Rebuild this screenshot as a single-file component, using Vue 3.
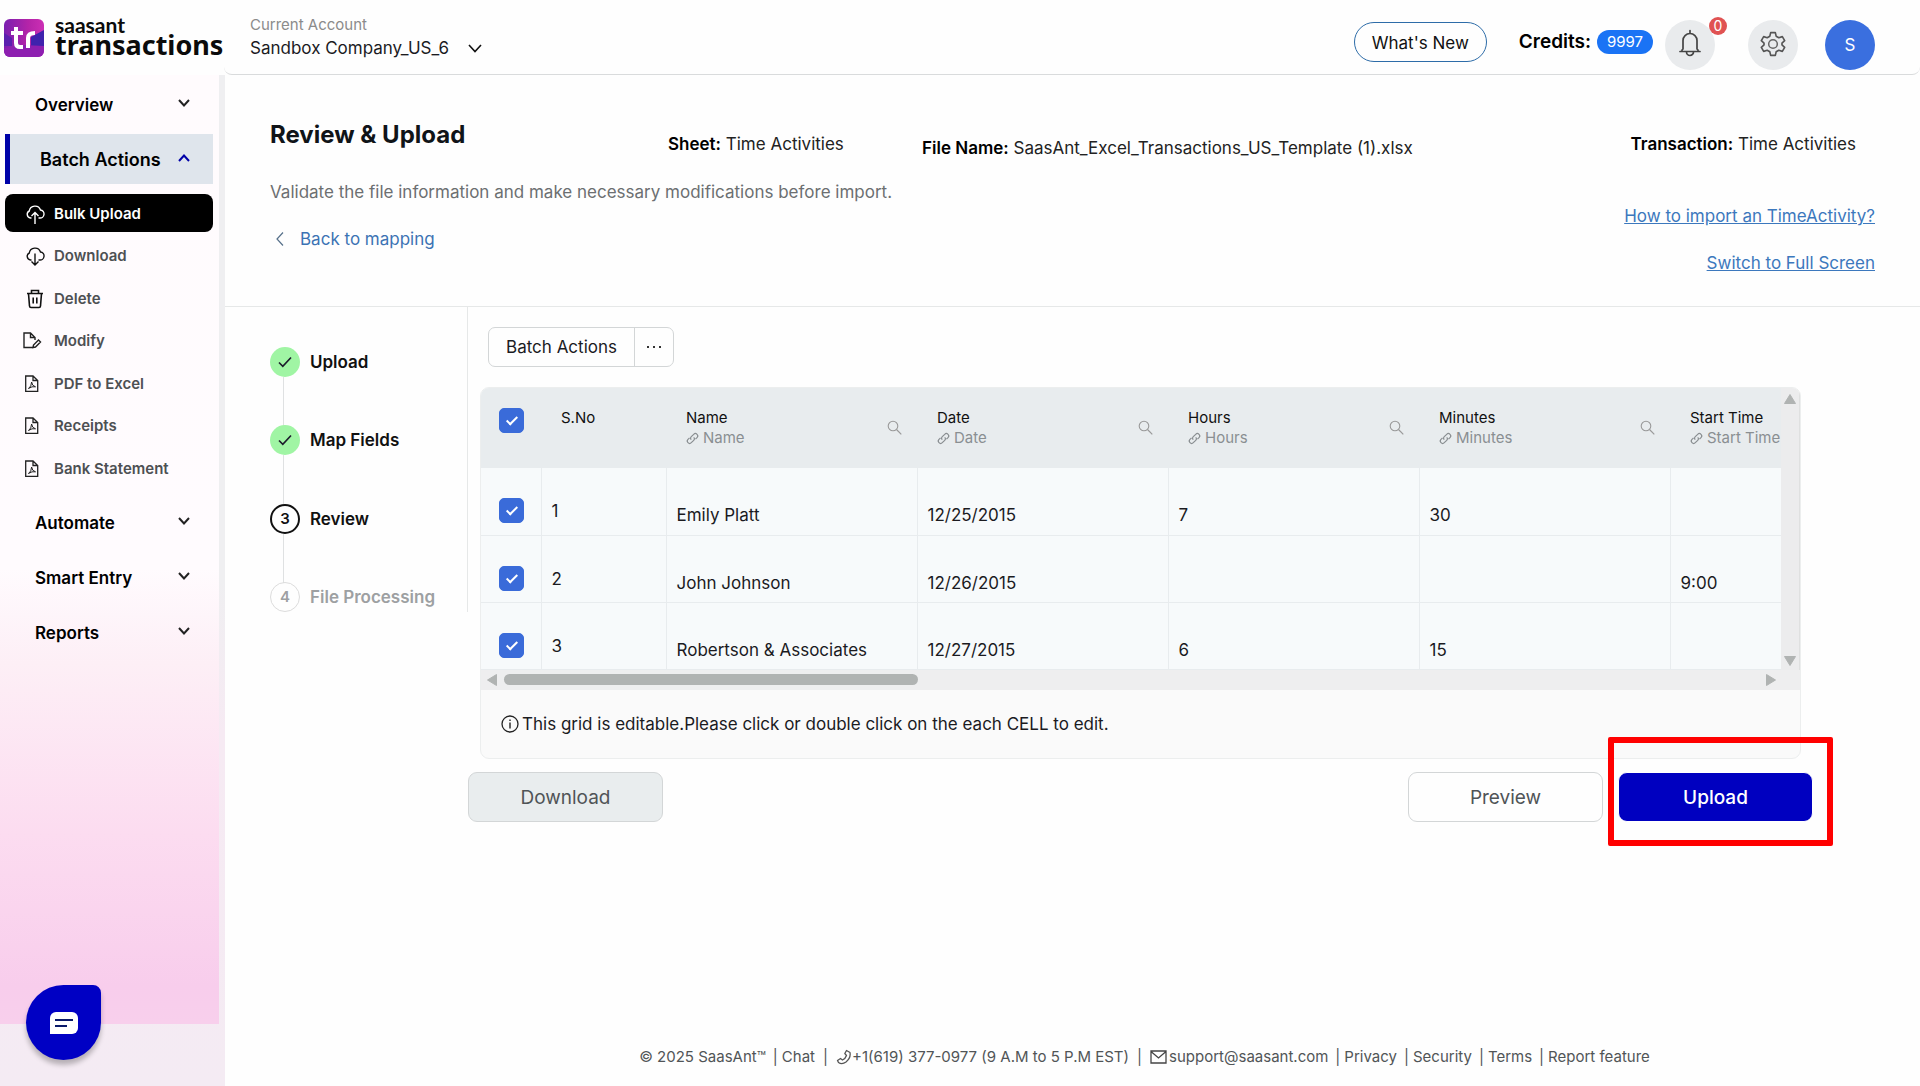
<script setup>
import { ref } from 'vue'

const subItems = [
  { label: 'Bulk Upload', icon: 'up', active: true },
  { label: 'Download', icon: 'down' },
  { label: 'Delete', icon: 'trash' },
  { label: 'Modify', icon: 'modify' },
  { label: 'PDF to Excel', icon: 'pdf' },
  { label: 'Receipts', icon: 'pdf' },
  { label: 'Bank Statement', icon: 'pdf' },
]
const groups = ['Automate', 'Smart Entry', 'Reports']

const steps = [
  { n: 1, label: 'Upload', state: 'done' },
  { n: 2, label: 'Map Fields', state: 'done' },
  { n: 3, label: 'Review', state: 'current' },
  { n: 4, label: 'File Processing', state: 'todo' },
]

const columns = ['Name', 'Date', 'Hours', 'Minutes', 'Start Time']
const rows = ref([
  { checked: true, cells: ['Emily Platt', '12/25/2015', '7', '30', ''] },
  { checked: true, cells: ['John Johnson', '12/26/2015', '', '', '9:00'] },
  { checked: true, cells: ['Robertson & Associates', '12/27/2015', '6', '15', ''] },
])
const allChecked = ref(true)
const footerLinks = ['Privacy', 'Security', 'Terms', 'Report feature']
</script>

<template>
  <div class="app">
    <header class="header">
      <a class="logo" href="#" aria-label="saasant transactions">
        <span class="logo-mark">
          <svg viewBox="0 0 40 38" width="40" height="38" aria-hidden="true">
            <defs>
              <linearGradient id="lg" x1="0" y1="0" x2="1" y2="0">
                <stop offset="0" stop-color="#7a1fb0" />
                <stop offset="0.6" stop-color="#b424a8" />
                <stop offset="1" stop-color="#cc2fb4" />
              </linearGradient>
            </defs>
            <rect width="40" height="38" rx="6" fill="url(#lg)" />
            <path d="M0 14L8 19V27H0Z" fill="#5a1fae" />
            <path d="M27 18L40 11V27H27Z" fill="#3f22ad" />
            <path d="M0 29L20 26L40 27V32A6 6 0 0 1 34 38H6A6 6 0 0 1 0 32Z" fill="#8d1fb0" />
            <path d="M12 8V24Q12 28 16 28H19M7 14H19M24 29V19Q24 14 31 14" fill="none" stroke="#fff" stroke-width="4" />
          </svg>
        </span>
        <span class="logo-text">
          <span class="logo-small">saasant</span>
          <span class="logo-big">transactions</span>
        </span>
      </a>

      <div class="bar">
        <div class="account">
          <span class="account-label">Current Account</span>
          <button class="account-name" type="button">
            Sandbox Company_US_6
            <svg viewBox="0 0 14 9" width="14" height="9" aria-hidden="true"><path d="M1 1L7 7.5L13 1" fill="none" stroke="#111" stroke-width="1.6" /></svg>
          </button>
        </div>
        <div class="tools">
          <button class="whats-new" type="button">What's New</button>
          <div class="credits"><span>Credits:</span><span class="credit-count">9997</span></div>
          <button class="round bell" type="button" aria-label="Notifications">
            <svg viewBox="0 0 24 28" width="24" height="28" aria-hidden="true">
              <path d="M2 22.500H22M4 22.500V21L5 20V11.500A7 7 0 0 1 19 11.500V20L20 21V22.500M12 1.500V4.500M8.500 23A3.500 3.500 0 0 0 15.500 23" fill="none" stroke="#444" stroke-width="1.700" stroke-linejoin="round" stroke-linecap="round" />
            </svg>
            <span class="bell-badge">0</span>
          </button>
          <button class="round gear" type="button" aria-label="Settings">
            <svg viewBox="0 0 24 24" width="28" height="28" aria-hidden="true">
              <path d="M10 2.200H14L14.700 5.300L17 6.600L20 5.700L22 9.100L19.700 11.200V12.800L22 14.900L20 18.300L17 17.400L14.700 18.700L14 21.800H10L9.300 18.700L7 17.400L4 18.300L2 14.900L4.300 12.800V11.200L2 9.100L4 5.700L7 6.600L9.300 5.300Z" fill="none" stroke="#555" stroke-width="1.400" stroke-linejoin="round" />
              <circle cx="12" cy="12" r="3.700" fill="none" stroke="#666" stroke-width="1.300" />
            </svg>
          </button>
          <button class="round avatar" type="button" aria-label="Profile">S</button>
        </div>
      </div>
    </header>

    <div class="body">
      <aside class="sidebar">
        <nav class="nav">
          <button class="group" type="button">
            Overview
            <svg viewBox="0 0 12 8" width="12" height="8" aria-hidden="true"><path d="M1 1L6 6.500L11 1" fill="none" stroke="#222" stroke-width="2" /></svg>
          </button>
          <button class="group open" type="button">
            Batch Actions
            <svg viewBox="0 0 12 8" width="12" height="8" aria-hidden="true"><path d="M1 7L6 1.500L11 7" fill="none" stroke="#0000a8" stroke-width="2" /></svg>
          </button>
          <ul class="sub">
            <li v-for="s in subItems" :key="s.label">
              <a href="#" class="sub-link" :class="{ active: s.active }">
                <svg v-if="s.icon === 'up'" viewBox="0 0 20 20" width="20" height="20" aria-hidden="true">
                  <path d="M6.500 14H5.500A3.700 3.700 0 0 1 4.300 7A5.800 5.800 0 0 1 15.500 6A4 4 0 0 1 14.500 14H13.500M10 20V8.500M6.500 12L10 8.500L13.500 12" fill="none" stroke="currentColor" stroke-width="1.400" />
                </svg>
                <svg v-else-if="s.icon === 'down'" viewBox="0 0 20 20" width="20" height="20" aria-hidden="true">
                  <path d="M6.500 14H5.500A3.700 3.700 0 0 1 4.300 7A5.800 5.800 0 0 1 15.500 6A4 4 0 0 1 14.500 14H13.500M10 7.500V19M6.500 15.500L10 19L13.500 15.500" fill="none" stroke="#111" stroke-width="1.400" />
                </svg>
                <svg v-else-if="s.icon === 'trash'" viewBox="0 0 20 20" width="20" height="20" aria-hidden="true">
                  <path d="M2 4.500H18M6.500 4.500V1.500H13.500V4.500M3.500 4.500L4.500 17Q4.600 18.500 6 18.500H14Q15.400 18.500 15.500 17L16.500 4.500M8.200 8.500V14.500M11.800 8.500V14.500" fill="none" stroke="#111" stroke-width="1.600" />
                </svg>
                <svg v-else-if="s.icon === 'modify'" class="shift" viewBox="0 0 20 20" width="20" height="20" aria-hidden="true">
                  <path d="M11 16.500H2V2H8.500L13 6.500V9M8.500 2V6.500H13M11 16.500L11.500 14L16.500 9L18.500 11L13.500 16L11 16.500Z" fill="none" stroke="#222" stroke-width="1.400" />
                </svg>
                <svg v-else class="shift" viewBox="0 0 20 20" width="20" height="20" aria-hidden="true">
                  <path d="M3.700 2H11L15.700 6.500V17.300H3.700ZM11 2V6.500H15.700" fill="none" stroke="#222" stroke-width="1.300" />
                  <path d="M6.500 14.500Q9.500 12.500 9.600 8Q10 12 13.500 12.800Q10 12 6.500 14.500Z" fill="none" stroke="#222" stroke-width="1" />
                </svg>
                <span>{{ s.label }}</span>
              </a>
            </li>
          </ul>
          <button v-for="g in groups" :key="g" class="group" type="button">
            {{ g }}
            <svg viewBox="0 0 12 8" width="12" height="8" aria-hidden="true"><path d="M1 1L6 6.500L11 1" fill="none" stroke="#222" stroke-width="2" /></svg>
          </button>
        </nav>
      </aside>

      <main class="main">
        <section class="intro">
          <div class="meta">
            <h1>Review &amp; Upload</h1>
            <p><b>Sheet:</b> Time Activities</p>
            <p class="file"><b>File Name:</b> SaasAnt_Excel_Transactions_US_Template (1).xlsx</p>
            <p class="tx"><b>Transaction:</b> Time Activities</p>
          </div>
          <div class="sub-meta">
            <div class="left">
              <p class="hint">Validate the file information and make necessary modifications before import.</p>
              <a class="back" href="#">
                <svg viewBox="0 0 8 14" width="8" height="14" aria-hidden="true"><path d="M7 0.500L1 7L7 13.500" fill="none" stroke="#56708a" stroke-width="1.200" /></svg>
                Back to mapping
              </a>
            </div>
            <div class="links">
              <a href="#">How to import an TimeActivity?</a>
              <a href="#">Switch to Full Screen</a>
            </div>
          </div>
        </section>

        <section class="work">
          <ol class="steps">
            <li v-for="s in steps" :key="s.n" :class="s.state">
              <span class="dot">
                <svg v-if="s.state === 'done'" viewBox="0 0 14 12" width="14" height="12" aria-hidden="true"><path d="M1 6.500L4.800 10.300L13 1.500" fill="none" stroke="#1c1c2c" stroke-width="1.700" /></svg>
                <template v-else>{{ s.n }}</template>
              </span>
              <span>{{ s.label }}</span>
            </li>
          </ol>

          <div class="content">
            <div class="split">
              <button type="button">Batch Actions</button>
              <button type="button" class="more" aria-label="More actions">
                <svg viewBox="0 0 14 2" width="14" height="2" aria-hidden="true"><path d="M0 0H2V2H0ZM6 0H8V2H6ZM12 0H14V2H12Z" fill="#333" /></svg>
              </button>
            </div>

            <div class="card">
              <div class="grid">
                <div class="view">
                  <table>
                    <colgroup>
                      <col class="c-check" />
                      <col class="c-no" />
                      <col v-for="c in columns" :key="c" class="c-data" />
                    </colgroup>
                    <thead>
                      <tr>
                        <th class="check"><input v-model="allChecked" type="checkbox" aria-label="Select all rows" /></th>
                        <th>S.No</th>
                        <th v-for="c in columns" :key="c">
                          <div class="head">
                            <div>
                              <div>{{ c }}</div>
                              <div class="mapped">
                                <svg viewBox="0 0 13 13" width="13" height="13" aria-hidden="true">
                                  <path d="M5.300 7.700C4.300 6.700 4.500 5.500 5.300 4.700L7.700 2.300A2.300 2.300 0 0 1 11 5.600L9.500 7.100M7.700 5.300C8.700 6.300 8.500 7.500 7.700 8.300L5.300 10.700A2.300 2.300 0 0 1 2 7.400L3.500 5.900" fill="none" stroke="#8a8f92" stroke-width="1.200" />
                                </svg>
                                {{ c }}
                              </div>
                            </div>
                            <svg class="search" viewBox="0 0 15 15" width="15" height="15" aria-hidden="true"><circle cx="6" cy="6" r="4.800" fill="none" stroke="#999" stroke-width="1.100" /><path d="M9.500 9.500L14.300 14.300" stroke="#999" stroke-width="1.200" /></svg>
                          </div>
                        </th>
                      </tr>
                    </thead>
                    <tbody>
                      <tr v-for="(r, i) in rows" :key="i">
                        <td class="check"><input v-model="r.checked" type="checkbox" :aria-label="'Select row ' + (i + 1)" /></td>
                        <td class="no">{{ i + 1 }}</td>
                        <td v-for="(c, j) in r.cells" :key="j">{{ c }}</td>
                      </tr>
                    </tbody>
                  </table>
                </div>
                <div class="vbar">
                  <svg viewBox="0 0 12 10" width="12" height="10" aria-hidden="true"><path d="M6 0.500L11.500 9.500H0.500Z" fill="#b0b3b2" stroke="#b0b3b2" stroke-linejoin="round" /></svg>
                  <svg viewBox="0 0 12 10" width="12" height="10" aria-hidden="true"><path d="M6 9.500L11.500 0.500H0.500Z" fill="#b0b3b2" stroke="#b0b3b2" stroke-linejoin="round" /></svg>
                </div>
              </div>
              <div class="hbar">
                <svg viewBox="0 0 10 12" width="10" height="12" aria-hidden="true"><path d="M0.500 6L9.500 0.500V11.500Z" fill="#b0b3b2" stroke="#b0b3b2" stroke-linejoin="round" /></svg>
                <div class="track"><div class="thumb"></div></div>
                <svg viewBox="0 0 10 12" width="10" height="12" aria-hidden="true"><path d="M9.500 6L0.500 0.500V11.500Z" fill="#b0b3b2" stroke="#b0b3b2" stroke-linejoin="round" /></svg>
              </div>
              <p class="note">
                <svg viewBox="0 0 18 18" width="18" height="18" aria-hidden="true"><circle cx="9" cy="9" r="8" fill="none" stroke="#222" stroke-width="1.300" /><path d="M9 7.500V13.500M9 4.500V6" stroke="#222" stroke-width="1.400" /></svg>
                This grid is editable.Please click or double click on the each CELL to edit.
              </p>
            </div>

            <div class="actions">
              <button type="button" class="btn download">Download</button>
              <button type="button" class="btn preview">Preview</button>
              <div class="upload-wrap"><button type="button" class="btn upload">Upload</button></div>
            </div>
          </div>
        </section>

        <footer class="footer">
          <span>© 2025 SaasAnt™</span><i>|</i><a href="#">Chat</a><i class="wide">|</i>
          <a href="#"><svg viewBox="0 0 16 16" width="16" height="16" aria-hidden="true"><path d="M10.500 1.500L14 3.500Q15 9 10 13Q6 16 2.500 13.500L1.500 11.500L4.500 9.500L6.500 11Q9.500 9.500 10.500 6.500L8.800 4.500Z" fill="none" stroke="#555" stroke-width="1.300" stroke-linejoin="round" /></svg>+1(619) 377-0977 (9 A.M to 5 P.M EST)</a><i class="wide">|</i>
          <a href="#"><svg class="mail" viewBox="0 0 17 14" width="17" height="14" aria-hidden="true"><path d="M1 1H16V13H1ZM1 1.500L8.500 8L16 1.500" fill="none" stroke="#444" stroke-width="1.300" /></svg>support@saasant.com</a>
          <template v-for="l in footerLinks" :key="l"><i>|</i><a href="#">{{ l }}</a></template>
        </footer>
      </main>
    </div>

    <button class="chat" type="button" aria-label="Open chat">
      <svg viewBox="0 0 28 22" width="28" height="22" aria-hidden="true">
        <path d="M6 0H22A6 6 0 0 1 28 6V16A6 6 0 0 1 22 22H0V6A6 6 0 0 1 6 0Z" fill="#fff" />
        <path d="M5 8H23M5 14H17" stroke="#0a1a6a" stroke-width="2" />
      </svg>
    </button>
  </div>
</template>

<style>
body {
  margin: 0;
  background: #fff;
}
</style>

<style scoped>
.app {
  display: flex;
  flex-direction: column;
  min-height: 100vh;
  font-family: Inter, "Liberation Sans", sans-serif;
  font-size: 17px;
  line-height: 24px;
  color: #1b1b1f;
  background: #fefefe;
}
.app *,
.app *::before,
.app *::after {
  box-sizing: border-box;
}
button {
  font: inherit;
  color: inherit;
  background: none;
  border: 0;
  padding: 0;
  cursor: pointer;
}
a {
  color: inherit;
  text-decoration: none;
}
p,
h1,
ul,
ol {
  margin: 0;
  padding: 0;
}
ul,
ol {
  list-style: none;
}
svg {
  flex: none;
}

/* header */
.header {
  display: flex;
  height: 75px;
}
.logo {
  display: flex;
  gap: 11px;
  width: 224px;
  padding: 19px 0 0 4px;
}
.logo-mark svg {
  display: block;
}
.logo-text {
  display: flex;
  flex-direction: column;
  color: #0b0b0b;
}
.logo-small {
  font-family: Lato, sans-serif;
  font-weight: 700;
  font-size: 21px;
  line-height: 12px;
}
.logo-big {
  font-family: "Noto Sans", sans-serif;
  font-weight: 700;
  font-size: 27px;
  line-height: 28px;
}
.bar {
  flex: 1;
  display: flex;
  justify-content: space-between;
  border-bottom: 1px solid #d9dbdc;
  border-radius: 0 0 8px 8px;
  padding: 0 45px 0 26px;
}
.account {
  display: flex;
  flex-direction: column;
  padding-top: 14px;
}
.account-label {
  font-size: 15px;
  line-height: 22px;
  color: #8b8b8b;
}
.account-name {
  display: flex;
  align-items: center;
  gap: 19px;
}
.tools {
  display: flex;
  align-items: flex-start;
  padding-top: 20px;
}
.whats-new {
  width: 133px;
  height: 40px;
  margin: 2px 32px 0 0;
  padding-top: 2px;
  border: 1px solid #2d6ca8;
  border-radius: 20px;
  color: #111;
}
.credits {
  display: flex;
  align-items: center;
  gap: 6px;
  margin: 10px 12px 0 0;
  font-weight: 600;
  font-size: 19px;
  color: #000;
}
.credit-count {
  width: 56px;
  border-radius: 13px;
  background: #1a73f5;
  color: #fff;
  font-weight: 400;
  font-size: 15px;
  text-align: center;
}
.round {
  position: relative;
  display: flex;
  align-items: center;
  justify-content: center;
  width: 50px;
  height: 50px;
  border-radius: 50%;
  background: #e9ebed;
}
.bell {
  padding-bottom: 4px;
}
.bell-badge {
  position: absolute;
  top: -3px;
  right: -12px;
  width: 18px;
  height: 18px;
  border-radius: 50%;
  background: #e05252;
  color: #fff;
  font-size: 14px;
  line-height: 18px;
}
.gear {
  margin-left: 33px;
  padding-bottom: 2px;
}
.avatar {
  margin-left: 27px;
  background: #3a6fdf;
  color: #fff;
}

/* sidebar */
.body {
  flex: 1;
  display: flex;
}
.sidebar {
  flex: none;
  width: 225px;
  padding-bottom: 62px;
  background: linear-gradient(#efeff1 0%, #efeff1 50%, #f6eaf3 65%, #f4ebf3 100%);
  display: flex;
}
.nav {
  width: 219px;
  padding: 2px 6px 0 5px;
  background: linear-gradient(#fffbfd 0%, #fffbfe 52%, #fdeff6 62%, #fcdcf0 80%, #f8cdec 96%, #f8cfec 100%);
}
.group {
  display: flex;
  align-items: center;
  justify-content: space-between;
  width: 208px;
  height: 55px;
  padding: 0 23px 0 30px;
  font-weight: 600;
  color: #000;
  text-align: left;
}
.group svg {
  margin-bottom: 4px;
}
.group.open {
  height: 50px;
  margin: 2px 0 10px;
  padding-top: 2px;
  border-left: 5px solid #0000a8;
  background: #dfe5ec;
  font-size: 18px;
}
.sub {
  margin-bottom: 4px;
}
.sub li {
  padding-bottom: 4px;
}
.sub li:nth-child(even) {
  padding-bottom: 5px;
}
.sub-link {
  display: flex;
  align-items: center;
  gap: 9px;
  height: 38px;
  width: 208px;
  padding: 2px 0 0 20px;
  border-radius: 8px;
  font-size: 15px;
  font-weight: 600;
  color: #4d5053;
}
.sub-link.active {
  background: #000;
  color: #fff;
}
.shift {
  margin: 0 3px 0 -3px;
}

/* intro */
.main {
  flex: 1;
  min-width: 0;
  display: flex;
  flex-direction: column;
}
.intro {
  height: 232px;
  padding: 45px 45px 0;
  border-bottom: 1px solid #e6e8e8;
}
.meta {
  display: grid;
  grid-template-columns: 398px 254px 1fr auto;
  align-items: start;
  height: 60px;
  color: #222;
}
.meta p {
  padding-top: 12px;
}
.meta .file {
  padding-top: 16px;
}
.meta .tx {
  padding-right: 19px;
}
.meta b {
  font-weight: 600;
  color: #000;
}
h1 {
  font-size: 24px;
  line-height: 30px;
  font-weight: 700;
  color: #101418;
}
.sub-meta {
  display: flex;
  justify-content: space-between;
}
.hint {
  color: #6c6f71;
}
.back {
  display: flex;
  align-items: center;
  gap: 16px;
  margin-top: 23px;
  padding-left: 6px;
  color: #3c73b4;
}
.links {
  display: flex;
  flex-direction: column;
  align-items: flex-end;
  gap: 23px;
  padding-top: 24px;
}
.links a {
  color: #3c78bd;
  text-decoration: underline;
}

/* steps */
.work {
  display: flex;
}
.steps {
  flex: none;
  width: 243px;
  height: 305px;
  padding: 40px 0 0 45px;
  border-right: 1px solid #e6e8e8;
}
.steps li {
  position: relative;
  display: flex;
  align-items: center;
  gap: 10px;
  height: 30px;
  margin-bottom: 49px;
  font-weight: 600;
  color: #111;
}
.steps li:nth-child(odd) {
  margin-bottom: 48px;
}
.steps li:not(:last-child)::after {
  content: "";
  position: absolute;
  left: 13px;
  top: 30px;
  height: 49px;
  width: 1px;
  background: #dfe1e2;
}
.dot {
  display: flex;
  align-items: center;
  justify-content: center;
  width: 30px;
  height: 30px;
  border-radius: 50%;
  font-size: 15px;
}
.done .dot {
  background: #a0f5a4;
}
.current .dot {
  border: 2px solid #111;
}
.todo .dot {
  border: 1px solid #dcdcdc;
}
.steps .todo {
  color: #9da0a2;
}

/* grid */
.content {
  flex: 1;
  min-width: 0;
  padding-right: 107px;
}
.split {
  display: flex;
  width: 186px;
  height: 40px;
  margin: 20px 0 20px 20px;
  border: 1px solid #d3d6d7;
  border-radius: 7px;
}
.split button {
  flex: 1;
}
.split .more {
  flex: none;
  width: 39px;
  display: flex;
  align-items: center;
  justify-content: center;
  border-left: 1px solid #d3d6d7;
}
.card {
  margin: 0 12px 13px;
  border: 1px solid #eceeee;
  border-radius: 9px;
  background: #fafafa;
  overflow: hidden;
}
.grid {
  display: flex;
}
.view {
  flex: 1;
  min-width: 0;
  overflow: hidden;
}
table {
  width: 1440px;
  table-layout: fixed;
  border-collapse: collapse;
}
.c-check {
  width: 60px;
}
.c-no {
  width: 125px;
}
.c-data {
  width: 251px;
}
th {
  height: 80px;
  padding: 20px 20px 0;
  background: #e8ecee;
  font-size: 15px;
  line-height: 20px;
  font-weight: 400;
  text-align: left;
  vertical-align: top;
  color: #111;
}
.head {
  display: flex;
  justify-content: space-between;
  white-space: nowrap;
}
.mapped {
  display: flex;
  align-items: center;
  gap: 4px;
  color: #8a8f92;
}
.search {
  margin: 12px -5px 0 0;
}
td {
  height: 67px;
  padding: 35px 10px 0;
  border: 1px solid #e8ecee;
  border-width: 0 0 1px 1px;
  background: #f7fafb;
  line-height: 24px;
  vertical-align: top;
}
td.no {
  padding-top: 31px;
}
td.check {
  padding: 30px 0 0 18px;
  border-left: 0;
}
th.check {
  padding: 20px 0 0 18px;
}
.check input {
  appearance: none;
  display: block;
  position: relative;
  width: 25px;
  height: 25px;
  margin: 0;
  border-radius: 5px;
  background: #fff;
  border: 1px solid #3a6bd9;
}
.check input:checked {
  background: #3a6bd9;
}
.check input:checked::after {
  content: "";
  position: absolute;
  left: 9px;
  top: 5px;
  width: 6px;
  height: 11px;
  border: solid #fff;
  border-width: 0 2px 2px 0;
  transform: rotate(45deg);
}
.vbar {
  flex: none;
  width: 19px;
  display: flex;
  flex-direction: column;
  align-items: center;
  justify-content: space-between;
  padding: 6px 0 4px;
  background: #ececed;
  border-right: 1px solid #dfe0e0;
}
.hbar {
  display: flex;
  align-items: center;
  height: 20px;
  padding: 0 24px 0 6px;
  background: #eeeeef;
}
.track {
  flex: 1;
  padding: 0 7px;
}
.thumb {
  width: 33%;
  height: 11px;
  border-radius: 6px;
  background: #b0b3b2;
}
.note {
  display: flex;
  align-items: center;
  gap: 3px;
  height: 68px;
  padding-left: 20px;
}

/* actions */
.actions {
  display: flex;
}
.btn {
  width: 195px;
  height: 50px;
  padding-top: 2px;
  border: 1px solid #d3d6d7;
  border-radius: 9px;
  font-size: 19px;
  color: #505457;
}
.download {
  margin-right: auto;
  background: #e9edee;
}
.upload-wrap {
  position: relative;
  margin-left: 15px;
}
.upload-wrap::after {
  content: "";
  position: absolute;
  inset: -35px -20px -24px -10px;
  border: 6px solid #ff0000;
  border-radius: 2px;
  pointer-events: none;
}
.upload {
  background: #0000c0;
  border-color: #fff;
  color: #fff;
  font-weight: 500;
}

/* footer */
.footer {
  display: flex;
  justify-content: center;
  align-items: center;
  margin-top: auto;
  padding: 0 0 17px 144px;
  font-size: 15px;
  color: #515557;
  white-space: nowrap;
}
.footer a {
  display: flex;
  align-items: center;
}
.footer i {
  font-style: normal;
  margin: 0 4px 0 7px;
}
.footer i.wide {
  margin: 0 8px;
}
.footer .mail {
  margin-right: 2px;
}

.chat {
  position: fixed;
  left: 26px;
  bottom: 26px;
  display: flex;
  align-items: center;
  justify-content: center;
  width: 75px;
  height: 75px;
  border-radius: 38px 8px 38px 38px;
  background: #0000c4;
  box-shadow: 0 5px 5px rgba(0, 0, 0, 0.25);
}
</style>
